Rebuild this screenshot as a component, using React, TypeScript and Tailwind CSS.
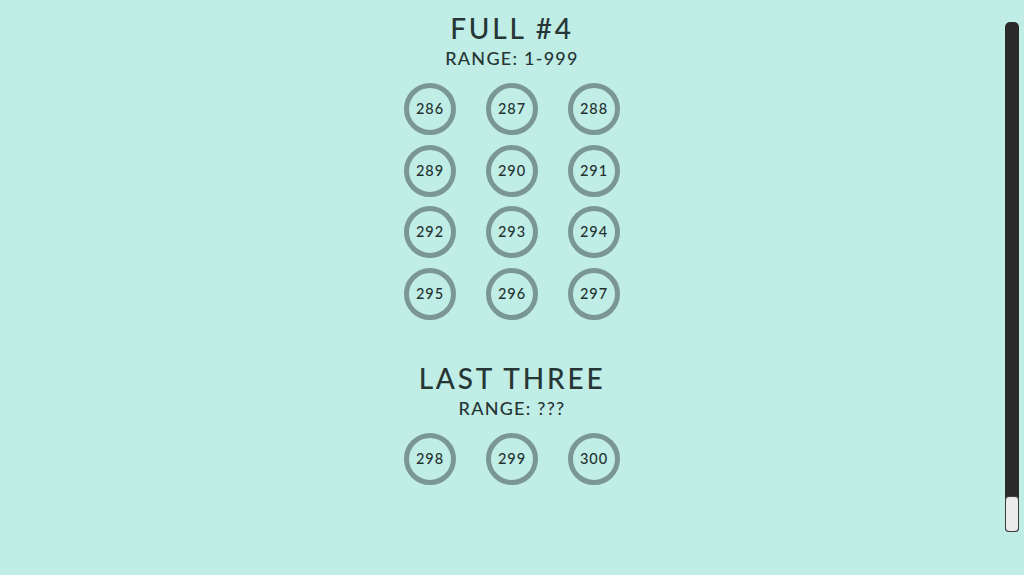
import React from 'react'

// --- Data --------------------------------------------------------------------

const sections = [
  { title: 'FULL #4', range: 'RANGE: 1-999', numbers: [286, 287, 288, 289, 290, 291, 292, 293, 294, 295, 296, 297] },
  { title: 'LAST THREE', range: 'RANGE: ???', numbers: [298, 299, 300] },
]

// --- Components --------------------------------------------------------------

function Ball({ n }: { n: number }) {
  return (
    <div className="flex h-[52px] w-[52px] items-center justify-center rounded-full border-[5px] border-[#7b9794] text-[14.5px] font-medium tracking-[0.06em] text-[#233331]">
      {n}
    </div>
  )
}

function Section({ title, range, numbers }: { title: string; range: string; numbers: number[] }) {
  return (
    <div className="flex flex-col items-center">
      <h2 className="text-[28px] font-medium leading-[32px] tracking-[0.1em] text-[#263634]">{title}</h2>
      <p className="mt-[3px] text-[18px] font-medium leading-[22px] tracking-[0.07em] text-[#263634]">{range}</p>
      <div className="mt-[14px] grid grid-cols-3 gap-x-[30px] gap-y-[9.5px]">
        {numbers.map((n) => (
          <Ball key={n} n={n} />
        ))}
      </div>
    </div>
  )
}

export default function App() {
  return (
    <div
      className="relative h-[575px] w-[1024px] overflow-hidden bg-[#c0ede6]"
      style={{ fontFamily: 'Lato, "Noto Sans", sans-serif' }}
    >
      <div className="flex flex-col items-center gap-[42px] pt-[12px]">
        {sections.map((s) => (
          <Section key={s.title} {...s} />
        ))}
      </div>

      {/* Vertical slider */}
      <div className="absolute left-[1005px] top-[22px] h-[510px] w-[14px] rounded-t-[5px] rounded-b-[4px] bg-[#2a2a2a]">
        <div className="absolute bottom-0 left-0 h-[36px] w-[14px] rounded-[4px] border border-[#3a3a3a] bg-[#ebebeb]" />
      </div>
    </div>
  )
}
